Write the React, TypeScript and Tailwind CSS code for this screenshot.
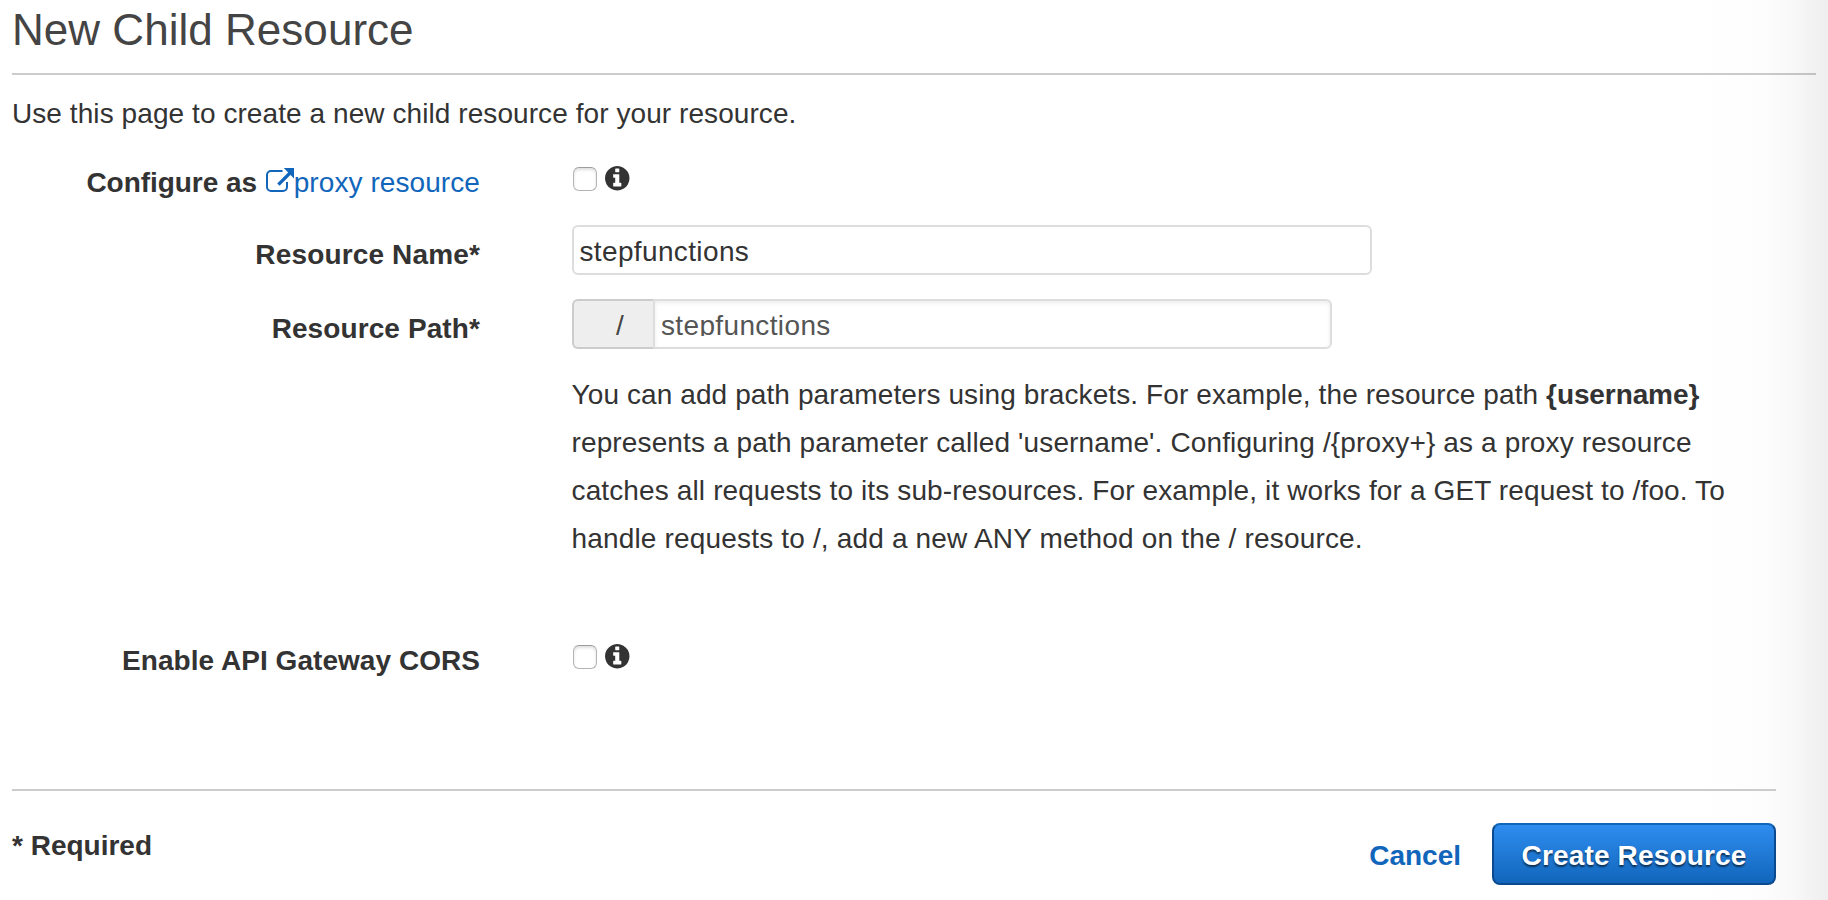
import type { ReactNode } from "react";

function ExternalLinkIcon() {
  return (
    <svg className="mt-1 h-[26px] w-[30px] shrink-0" viewBox="0 0 30 26" fill="none">
      <path
        d="M17.5 4H6A4 4 0 0 0 2 8V20A4 4 0 0 0 6 24H18A4 4 0 0 0 22 20V15"
        stroke="#1166bb"
        strokeWidth="2"
      />
      <path d="M13.4 17.6L25 6" stroke="#1166bb" strokeWidth="3.3" />
      <path d="M18.8 1H29V11.4z" fill="#1166bb" />
    </svg>
  );
}

function InfoIcon() {
  return (
    <svg className="ml-2 h-[24.5px] w-[24.5px] fill-[#333333]" viewBox="0 128 1536 1536">
      <path d="M1024 1376v-160q0-14-9-23t-23-9h-96v-512q0-14-9-23t-23-9h-320q-14 0-23 9t-9 23v160q0 14 9 23t23 9h96v320h-96q-14 0-23 9t-9 23v160q0 14 9 23t23 9h448q14 0 23-9t9-23zm-128-896v-160q0-14-9-23t-23-9h-192q-14 0-23 9t-9 23v160q0 14 9 23t23 9h192q14 0 23-9t9-23zm640 416q0 209-103 385.5t-279.5 279.5-385.5 103-385.5-103-279.5-279.5-103-385.5 103-385.5 279.5-279.5 385.5-103 385.5 103 279.5 279.5 103 385.5z" />
    </svg>
  );
}

function Row({ label, className, children }: { label: ReactNode; className: string; children: ReactNode }) {
  return (
    <div className={`flex items-start gap-[92px] ${className}`}>
      <div className="flex w-[468px] shrink-0 justify-end font-bold tracking-[0.1px] whitespace-nowrap">{label}</div>
      <div className="flex flex-col">{children}</div>
    </div>
  );
}

function CheckWithInfo() {
  return (
    <div className="flex items-start pt-[5px]">
      <span className="mt-px ml-px h-6 w-6 rounded-md border border-[#b4b4b4] border-t-[#9c9c9c] bg-white shadow-[inset_0_2px_3px_rgba(0,0,0,0.13)]" />
      <InfoIcon />
    </div>
  );
}

export default function App() {
  return (
    <div className="h-[900px] w-[1828px] overflow-hidden bg-[linear-gradient(to_right,#ffffff_1700px,#fdfdfd_1765px,#f9f9f9_1792px,#f3f3f3_1810px,#eeeeee_1828px)] pl-3 font-['Liberation_Sans',Arial,sans-serif] text-[28px] leading-[40px] text-[#333333]">
      <header className="h-[75px] w-[1804px] border-b-2 border-[#00000033] pt-[2px]">
        <h1 className="text-[44px] leading-[56px] tracking-[0.03px] text-[#444444]">New Child Resource</h1>
      </header>
      <p className="mt-[19px] tracking-[0.075px]">Use this page to create a new child resource for your resource.</p>

      <div className="mt-[27px]">
        <Row
          className="h-16"
          label={
            <span className="flex pt-[2px] tracking-normal">
              <span className="-tracking-[0.05px]">Configure as&nbsp;</span>
              <a className="flex font-normal text-[#1166bb]">
                <ExternalLinkIcon />
                <span className="-ml-px tracking-[0.08px]">proxy resource</span>
              </a>
            </span>
          }
        >
          <CheckWithInfo />
        </Row>

        <Row className="h-[74px]" label={<span className="pt-[10px] tracking-[0.15px]">Resource Name*</span>}>
          <div className="h-[50px] w-[800px] rounded-md border-2 border-[#dddddd] bg-white pt-[5px] pl-[5.5px] tracking-[0.36px]">
            stepfunctions
          </div>
        </Row>

        <Row className="h-[341px]" label={<span className="pt-[10px]">Resource Path*</span>}>
          <div className="flex h-[50px] w-[760px]">
            <div className="w-[81px] rounded-l-md border-2 border-r-0 border-[#cccccc] bg-[#eeeeee] pt-[5px] pl-[42px] text-[#444444]">
              /
            </div>
            <div className="flex-1 rounded-r-md border-2 border-[#dddddd] bg-white pt-[5px] pl-1.5 tracking-[0.36px] text-[#555555] shadow-[inset_0_2px_4px_rgba(0,0,0,0.08)]">
              <div className="h-[30px] overflow-hidden">stepfunctions</div>
            </div>
          </div>
          <p className="mt-[22px] -ml-[0.5px] leading-[48px] whitespace-nowrap">
            <span className="tracking-[0.1px]">
              You can add path parameters using brackets. For example, the resource path{" "}
            </span>
            <b className="-tracking-[0.1px]">{"{username}"}</b>
            <br />
            <span className="tracking-[0.13px]">
              represents a path parameter called 'username'. Configuring {"/{proxy+}"} as a proxy resource
            </span>
            <br />
            <span className="tracking-[0.13px]">
              catches all requests to its sub-resources. For example, it works for a GET request to /foo. To
            </span>
            <br />
            <span className="tracking-[0.17px]">handle requests to /, add a new ANY method on the / resource.</span>
          </p>
        </Row>

        <Row
          className="h-[149px]"
          label={<span className="pt-px tracking-[0.05px]">Enable API Gateway CORS</span>}
        >
          <div className="-mt-px">
            <CheckWithInfo />
          </div>
        </Row>
      </div>

      <footer className="flex w-[1764px] items-start border-t-2 border-[#cccccc] font-bold">
        <span className="pt-[35px]">* Required</span>
        <a className="mt-[45px] ml-auto text-[#1166bb]">Cancel</a>
        <button className="mt-8 ml-[31px] h-[62px] w-[284px] rounded-lg border-2 border-[#0b4a8f] border-t-[#1166bb] bg-linear-to-b from-[#2e8df0] to-[#1166bb] pt-1 tracking-[0.15px] text-white [text-shadow:0_2px_2px_rgba(0,0,0,0.6)]">
          Create Resource
        </button>
      </footer>
    </div>
  );
}
